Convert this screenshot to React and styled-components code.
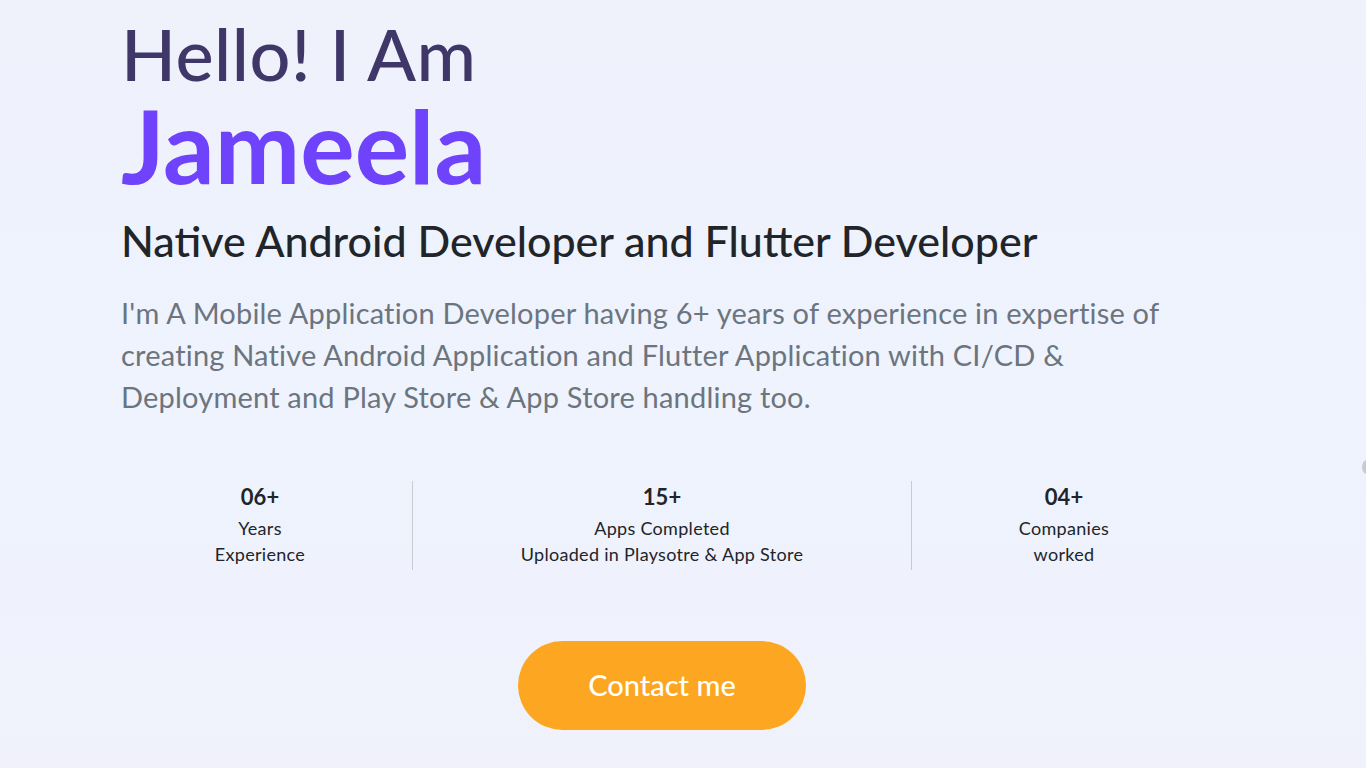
import React from "react";
import styled, { createGlobalStyle } from "styled-components";

const GlobalStyle = createGlobalStyle`
  html, body {
    margin: 0;
    padding: 0;
  }
  body {
    font-family: "Lato", "Liberation Sans", sans-serif;
    background: linear-gradient(180deg, #eff1fb 0%, #eef3fe 50%, #f0f1fb 100%);
    min-height: 768px;
    overflow: hidden;
  }
`;

const stats = [
  { value: "06+", lines: ["Years", "Experience"] },
  { value: "15+", lines: ["Apps Completed", "Uploaded in Playsotre & App Store"] },
  { value: "04+", lines: ["Companies", "worked"] },
];

export default function App() {
  return (
    <>
      <GlobalStyle />
      <Page>
        <Hero>
          <Greeting>Hello! I Am</Greeting>
          <Name>Jameela</Name>
          <Role>Native Android Developer and Flutter Developer</Role>
          <Intro>
            I'm A Mobile Application Developer having 6+ years of experience in
            expertise of creating Native Android Application and Flutter
            Application with CI/CD &amp; Deployment and Play Store &amp; App
            Store handling too.
          </Intro>
        </Hero>
        <StatsRow>
          {stats.map((s, i) => (
            <React.Fragment key={s.value}>
              {i > 0 && <Divider />}
              <Stat>
                <StatValue>{s.value}</StatValue>
                {s.lines.map((l) => (
                  <StatLabel key={l}>{l}</StatLabel>
                ))}
              </Stat>
            </React.Fragment>
          ))}
        </StatsRow>
        <ButtonRow>
          <ContactButton>Contact me</ContactButton>
        </ButtonRow>
      </Page>
      <EdgeDot />
    </>
  );
}

const Page = styled.div`
  padding: 0 0 0 121px;
`;

const Hero = styled.div`
  width: 1045px;
`;

const Greeting = styled.h1`
  margin: 0;
  padding-top: 11px;
  font-size: 72px;
  line-height: 84px;
  font-weight: 500;
  letter-spacing: 0.5px;
  color: #3f3768;
`;

const Name = styled.h1`
  margin: 0;
  font-size: 102px;
  line-height: 100px;
  font-weight: 700;
  color: #6f42fb;
`;

const Role = styled.h3`
  margin: 21px 0 0;
  font-size: 43px;
  line-height: 50px;
  font-weight: 500;
  color: #212529;
`;

const Intro = styled.p`
  margin: 26px 0 0;
  font-size: 29px;
  line-height: 42px;
  letter-spacing: 0.2px;
  color: #6c757d;
`;

const StatsRow = styled.div`
  display: grid;
  grid-template-columns: 304px 1px 498px 1px 304px;
  margin: 63px 0 0 -13px;
  align-items: stretch;
`;

const Divider = styled.div`
  background: #c9cbd1;
`;

const Stat = styled.div`
  text-align: center;
  color: #212529;
  padding: 2px 0 3px;
`;

const StatValue = styled.div`
  font-size: 22px;
  line-height: 28px;
  font-weight: 700;
  margin-bottom: 4px;
`;

const StatLabel = styled.div`
  font-size: 18px;
  line-height: 26px;
  letter-spacing: 0.3px;
`;

const ButtonRow = styled.div`
  display: flex;
  padding-left: 397px;
  margin-top: 71px;
`;

const ContactButton = styled.button`
  width: 288px;
  height: 89px;
  border: none;
  border-radius: 45px;
  background: #fca622;
  color: #ffffff;
  font-family: inherit;
  font-size: 29px;
  font-weight: 500;
  padding-bottom: 4px;
  cursor: pointer;
`;

const EdgeDot = styled.div`
  position: absolute;
  right: -6px;
  top: 460px;
  width: 10px;
  height: 14px;
  border-radius: 50%;
  background: #c9cad0;
`;
